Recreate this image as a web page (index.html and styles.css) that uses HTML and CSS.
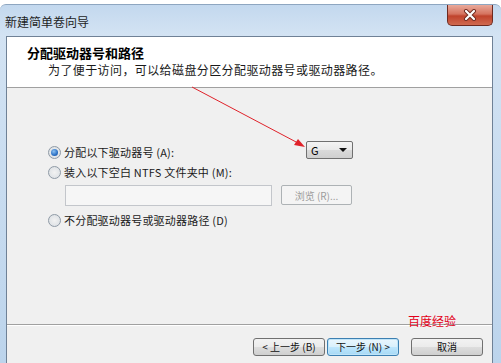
FILE: index.html
```html
<!DOCTYPE html>
<html lang="zh-CN">
<head>
  <meta charset="UTF-8">
  <title>新建简单卷向导</title>
  <link rel="stylesheet" href="styles.css">
</head>
<body>

<div class="window">
  <div class="title-bar">
    <span class="title">新建简单卷向导</span>
    <button class="close">
      <svg width="14" height="12" viewBox="0 0 14 12">
        <path d="M3 2 L11 10 M11 2 L3 10" stroke="#6d2a20" stroke-width="4" stroke-linecap="round"/>
        <path d="M3 2 L11 10 M11 2 L3 10" stroke="#ffffff" stroke-width="2.2" stroke-linecap="round"/>
      </svg>
    </button>
  </div>

  <div class="client">
    <div class="header">
      <div class="header-title">分配驱动器号和路径</div>
      <div class="header-sub">为了便于访问，可以给磁盘分区分配驱动器号或驱动器路径。</div>
    </div>

    <div class="content">
      <div class="row row-letter">
        <label class="option"><span class="radio checked"></span>分配以下驱动器号 (A):</label>
        <div class="combo"><span>G</span><span class="caret"></span></div>
      </div>
      <div class="row">
        <label class="option"><span class="radio"></span>装入以下空白 NTFS 文件夹中 (M):</label>
      </div>
      <div class="row row-path">
        <div class="path-input"></div>
        <button class="browse" disabled>浏览 (R)...</button>
      </div>
      <div class="row">
        <label class="option"><span class="radio"></span>不分配驱动器号或驱动器路径 (D)</label>
      </div>
    </div>

    <div class="footer">
      <span class="watermark">百度经验</span>
      <button class="btn">&lt; 上一步 (B)</button>
      <button class="btn btn-default">下一步 (N) &gt;</button>
      <button class="btn btn-cancel">取消</button>
    </div>
  </div>
</div>

<!-- red annotation arrow -->
<svg class="arrow" width="501" height="363" viewBox="0 0 501 363">
  <line x1="192" y1="87" x2="298" y2="143" stroke="#e0222a" stroke-width="1"/>
  <polygon points="305,147 294,145 298,139" fill="#e0222a"/>
</svg>

</body>
</html>
```

FILE: styles.css
```css
body {
  margin: 0;
  background: #ffffff;
  font-family: "Noto Sans CJK SC", "Liberation Sans", sans-serif;
  color: #000;
  overflow: hidden;
}
.window {
  margin-top: 4px;
  height: 359px;
  background: linear-gradient(to bottom, #c3d8ee 0px, #d3e3f3 30px, #bcd4ec 100%);
  border-top: 1px solid #8ea6c0;
  border-radius: 6px 6px 0 0;
  display: flex;
  flex-direction: column;
}
.title-bar {
  height: 31px;
  display: flex;
  align-items: flex-start;
  padding-left: 5px;
  padding-right: 8px;
}
.title {
  font-size: 12px;
  line-height: 12px;
  margin-top: 11px;
  color: #1e1e1e;
  flex: 1;
}
.close {
  width: 46px;
  height: 21px;
  border: 1px solid #6d2a20;
  border-top: none;
  border-radius: 0 0 5px 5px;
  background: linear-gradient(to bottom, #e9a99a 0%, #d5735f 45%, #c0432c 55%, #d06a50 100%);
  padding: 0;
  display: flex;
  align-items: center;
  justify-content: center;
}
.client {
  margin-left: 6px;
  width: 485px;
  flex: 1;
  border: 1px solid #6f8196;
  border-bottom: none;
  background: #f0f0f0;
  display: flex;
  flex-direction: column;
}
.header {
  height: 50px;
  background: #ffffff;
  border-bottom: 1px solid #a0a0a0;
  padding-left: 20px;
}
.header-title {
  font-size: 13px;
  font-weight: bold;
  line-height: 14px;
  margin-top: 9px;
}
.header-sub {
  font-size: 12px;
  line-height: 12px;
  margin-top: 4px;
  padding-left: 21px;
  letter-spacing: 0.4px;
  color: #1a1a1a;
}
.content {
  flex: 1;
  padding-left: 41px;
  padding-top: 52px;
  border-bottom: 1px solid #a0a0a0;
  box-shadow: 0 1px 0 #ffffff;
}
.row {
  display: flex;
  align-items: center;
  height: 16px;
  margin-bottom: 5px;
}
.row-letter {
  height: 19px;
  margin-bottom: 5px;
}
.row-letter .option {
  width: 258px;
  padding-top: 5px;
}
.row-path {
  height: 20px;
  margin-bottom: 7px;
  padding-left: 17px;
}
.option {
  display: flex;
  align-items: center;
  font-size: 11px;
  line-height: 14px;
  letter-spacing: 0.2px;
  color: #1a1a1a;
}
.radio {
  width: 11px;
  height: 11px;
  border: 1px solid #8f9aa6;
  border-radius: 50%;
  background: radial-gradient(circle, #f2f2f2 0%, #d8dde2 100%);
  margin-right: 3px;
  position: relative;
}
.radio.checked::after {
  content: "";
  position: absolute;
  left: 2px;
  top: 2px;
  width: 7px;
  height: 7px;
  border-radius: 50%;
  background: radial-gradient(circle at 40% 35%, #8cc2f2 0%, #2a6fc4 60%, #1b4f9a 100%);
}
.combo {
  width: 47px;
  height: 18px;
  border: 1px solid #707070;
  border-radius: 2px;
  background: linear-gradient(to bottom, #f4f4f4 0%, #e9e9e9 50%, #dadada 51%, #cfcfcf 100%);
  display: flex;
  align-items: center;
  justify-content: space-between;
  padding: 0 5px 0 4px;
  box-sizing: border-box;
  font-size: 11px;
}
.caret {
  width: 0;
  height: 0;
  border-left: 4px solid transparent;
  border-right: 4px solid transparent;
  border-top: 4px solid #111;
}
.path-input {
  width: 205px;
  height: 19px;
  border: 1px solid #c3c6cb;
  background: #f6f6f6;
}
.browse {
  margin-left: 9px;
  width: 71px;
  height: 20px;
  border: 1px solid #adb2b5;
  border-radius: 2px;
  background: #f4f4f4;
  color: #9c9c9c;
  font-family: inherit;
  font-size: 10px;
  padding: 0;
}
.footer {
  height: 39px;
  display: flex;
  align-items: flex-start;
  justify-content: flex-end;
  padding-top: 13px;
  padding-right: 9px;
  box-sizing: border-box;
  position: relative;
}
.watermark {
  position: absolute;
  left: 401px;
  top: -11px;
  font-size: 12px;
  line-height: 13px;
  color: #e2001a;
}
.btn {
  width: 72px;
  height: 18px;
  border: 1px solid #707070;
  border-radius: 3px;
  background: linear-gradient(to bottom, #f2f2f2 0%, #ebebeb 50%, #dddddd 51%, #cfcfcf 100%);
  font-family: inherit;
  font-size: 10px;
  line-height: 14px;
  padding: 0;
  color: #111;
  margin-left: 2px;
}
.btn-default {
  border-color: #3c7fb1;
  box-shadow: inset 0 0 0 1px #bfe4f8;
  background: linear-gradient(to bottom, #eaf6fd 0%, #d9f0fc 50%, #bee6fd 51%, #a7d9f5 100%);
}
.btn-cancel {
  margin-left: 12px;
}
.arrow {
  position: absolute;
  left: 0;
  top: 0;
  pointer-events: none;
}
```
